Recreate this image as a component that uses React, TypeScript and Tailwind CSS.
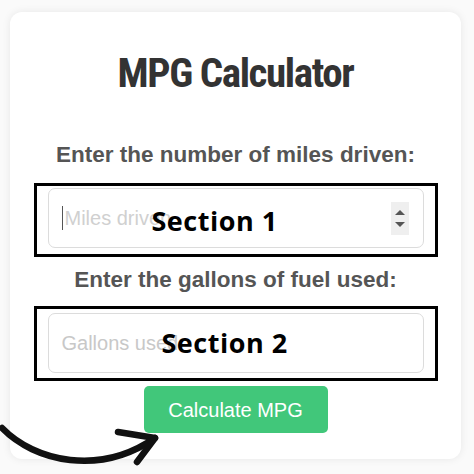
import React from "react";

const Spinner = () => (
  <div className="flex h-[33px] w-[18px] flex-col items-center justify-center gap-[7px] bg-[#efefef]">
    <span className="h-0 w-0 border-x-[5px] border-b-[5px] border-x-transparent border-b-[#555]" />
    <span className="h-0 w-0 border-x-[5px] border-t-[5px] border-x-transparent border-t-[#555]" />
  </div>
);

const Arrow = () => (
  <svg
    className="pointer-events-none absolute left-0 top-[420px]"
    width="170"
    height="54"
    viewBox="0 420 170 54"
    fill="none"
    stroke="#111"
    strokeLinecap="round"
    strokeLinejoin="round"
  >
    <path d="M2 428 C 35 462, 100 476, 155 438" strokeWidth="6.5" />
    <path d="M118 432 L155 438 L137 462" strokeWidth="6.5" />
  </svg>
);

export default function App() {
  return (
    <div className="relative h-[474px] w-[474px] overflow-hidden bg-[#fafafa] pt-[12px] pl-[10px]">
      <div className="flex h-[447px] w-[451px] flex-col items-center rounded-[12px] bg-white pt-[37px] shadow-[0_0_8px_rgba(0,0,0,0.08)]">
        <h1 className="font-['Roboto'] text-[41px] font-bold leading-[48px] tracking-[-1.4px] text-[#333] font-stretch-condensed">
          MPG Calculator
        </h1>

        <label className="mt-[45px] font-['Liberation_Sans',Arial,sans-serif] text-[22.5px] font-bold leading-[26px] text-[#555]">
          Enter the number of miles driven:
        </label>

        <div className="relative mt-[15px] w-[404px] border-[3px] border-black px-[11px] pt-[2px] pb-[6px]">
          <div className="flex h-[60px] items-center rounded-[7px] border border-[#dcdcdc] pr-[14px] pl-[13px]">
            <span className="h-[24px] w-px bg-[#555]" />
            <input
              type="text"
              placeholder="Miles driven"
              className="ml-[2px] min-w-0 flex-1 bg-transparent font-['Liberation_Sans',Arial,sans-serif] text-[20px] outline-none placeholder:text-[#d0d0d0]"
            />
            <Spinner />
          </div>
          <span className="absolute top-[21px] left-[115px] font-['Open_Sans',sans-serif] text-[27px] font-bold leading-none tracking-[0.5px] text-black">
            Section 1
          </span>
        </div>

        <label className="mt-[10px] font-['Liberation_Sans',Arial,sans-serif] text-[22.5px] font-bold leading-[26px] text-[#555]">
          Enter the gallons of fuel used:
        </label>

        <div className="relative mt-[13px] w-[404px] border-[3px] border-black px-[11px] pt-[4px] pb-[5px]">
          <div className="flex h-[60px] items-center rounded-[7px] border border-[#dcdcdc] px-[13px]">
            <input
              type="text"
              placeholder="Gallons used"
              className="min-w-0 flex-1 bg-transparent font-['Liberation_Sans',Arial,sans-serif] text-[20px] outline-none placeholder:text-[#c8c8c8]"
            />
          </div>
          <span className="absolute top-[20px] left-[125px] font-['Open_Sans',sans-serif] text-[27px] font-bold leading-none tracking-[0.5px] text-black">
            Section 2
          </span>
        </div>

        <button className="mt-[5px] h-[47px] w-[184px] rounded-[5px] bg-[#41c77a] font-['Liberation_Sans',Arial,sans-serif] text-[20px] text-white">
          Calculate MPG
        </button>
      </div>
      <Arrow />
    </div>
  );
}
